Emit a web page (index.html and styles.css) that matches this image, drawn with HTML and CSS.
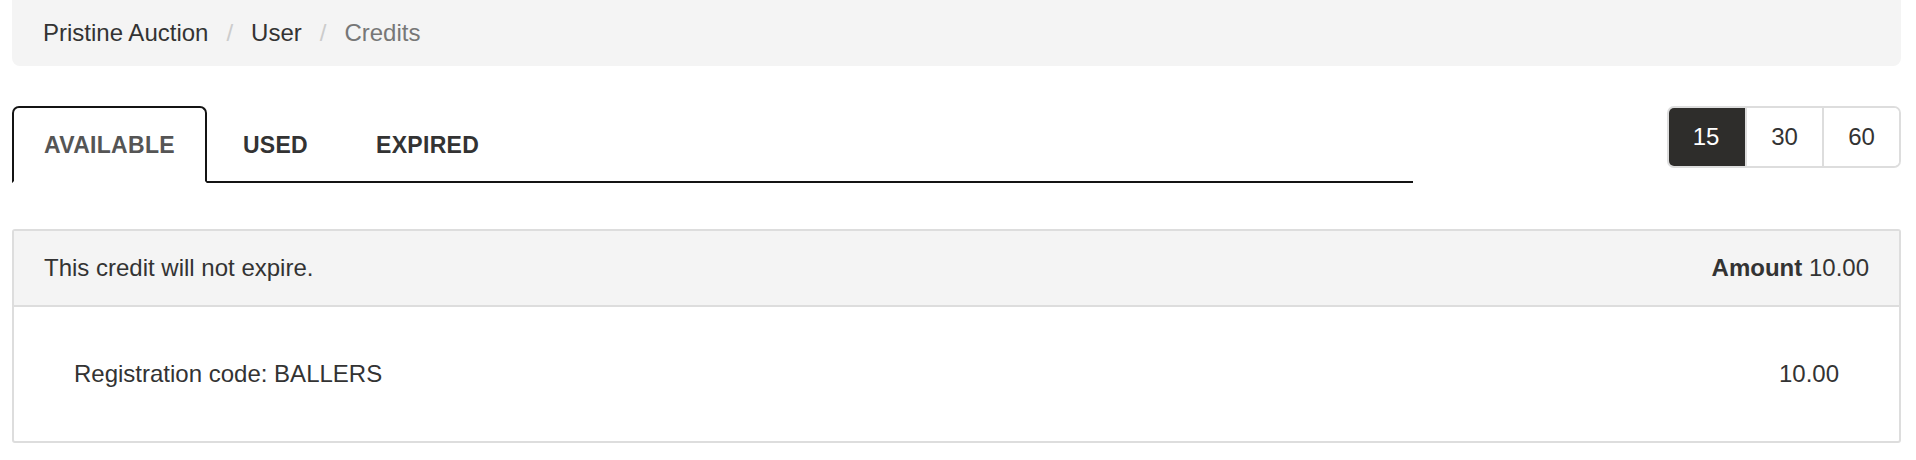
FILE: index.html
```html
<!DOCTYPE html>
<html>
<head>
<meta charset="utf-8">
<link rel="stylesheet" href="styles.css">
</head>
<body>
<div class="page">
  <ol class="breadcrumb">
    <li class="crumb">Pristine Auction</li>
    <li class="sep">/</li>
    <li class="crumb">User</li>
    <li class="sep">/</li>
    <li class="crumb current">Credits</li>
  </ol>

  <div class="toolbar">
    <ul class="tabs">
      <li class="tab active">AVAILABLE</li>
      <li class="tab">USED</li>
      <li class="tab">EXPIRED</li>
    </ul>
    <div class="btn-group">
      <div class="btn active">15</div>
      <div class="btn">30</div>
      <div class="btn">60</div>
    </div>
  </div>

  <div class="panel">
    <div class="panel-heading">
      <span>This credit will not expire.</span>
      <span><b>Amount</b> 10.00</span>
    </div>
    <div class="panel-body">
      <span>Registration code: BALLERS</span>
      <span>10.00</span>
    </div>
  </div>
</div>
</body>
</html>
```
FILE: styles.css
```css
html, body {
  margin: 0;
  padding: 0;
  background: #fff;
}
body {
  font-family: "Liberation Sans", Arial, Helvetica, sans-serif;
  font-size: 24px;
  color: #333;
}
.page {
  padding: 0 15px 0 12px;
}
.breadcrumb {
  list-style: none;
  margin: 0;
  padding: 0 0 0 31px;
  height: 66px;
  background: #f4f4f4;
  border-radius: 0 0 8px 8px;
  display: flex;
  align-items: center;
}
.crumb { color: #333; }
.crumb.current { color: #777; }
.sep {
  color: #ccc;
  margin: 0 18px;
}
.toolbar {
  margin-top: 40px;
  display: flex;
  justify-content: space-between;
  align-items: flex-start;
}
.tabs {
  list-style: none;
  margin: 0;
  padding: 0;
  width: 1401px;
  height: 77px;
  box-sizing: border-box;
  border-bottom: 2px solid #141414;
  display: flex;
  align-items: flex-start;
}
.tab {
  box-sizing: border-box;
  height: 77px;
  padding: 2px 30px 0;
  margin-right: 4px;
  margin-bottom: -2px;
  border: 2px solid transparent;
  border-radius: 7px 7px 0 0;
  display: flex;
  align-items: center;
  font-size: 23px;
  font-weight: bold;
  letter-spacing: 0.3px;
  color: #333;
}
.tab.active {
  border-color: #141414;
  border-bottom-color: #fff;
  background: #fff;
  color: #555;
}
.btn-group {
  display: flex;
  height: 62px;
  box-sizing: border-box;
  border: 2px solid #ddd;
  border-radius: 7px;
  overflow: hidden;
}
.btn {
  width: 75px;
  display: flex;
  align-items: center;
  justify-content: center;
  color: #333;
  background: #fff;
}
.btn + .btn {
  border-left: 2px solid #ddd;
}
.btn.active {
  background: #2e2d2b;
  color: #fff;
  margin: -2px 0 -2px -2px;
  width: 78px;
}
.panel {
  margin-top: 46px;
  border: 2px solid #ddd;
  border-radius: 3px;
}
.panel-heading {
  height: 76px;
  box-sizing: border-box;
  background: #f4f4f4;
  border-bottom: 2px solid #ddd;
  padding: 0 30px;
  display: flex;
  justify-content: space-between;
  align-items: center;
}
.panel-heading b { color: #333; }
.panel-body {
  height: 134px;
  padding: 0 60px;
  display: flex;
  justify-content: space-between;
  align-items: center;
}
```
